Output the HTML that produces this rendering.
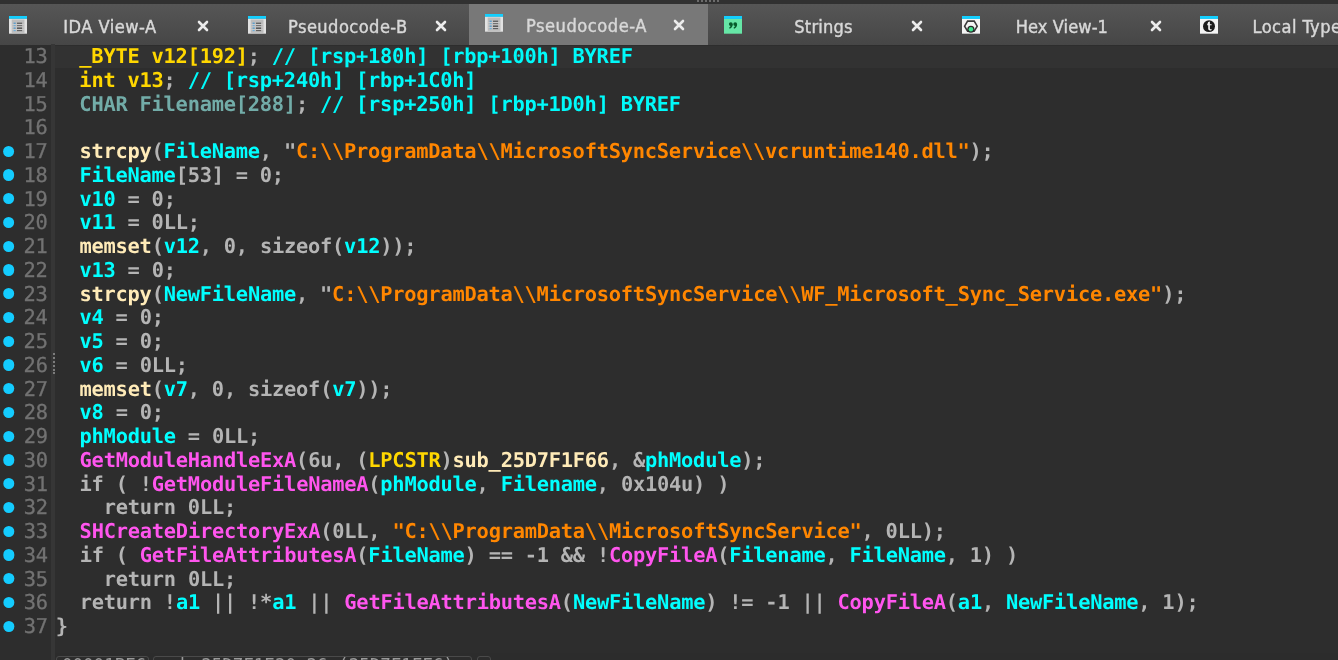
<!DOCTYPE html>
<html><head><meta charset="utf-8"><title>IDA - Pseudocode-A</title>
<style>
html,body{margin:0;padding:0}
body{width:1338px;height:660px;overflow:hidden;background:#2d2d2d;position:relative;font-family:"DejaVu Sans Mono","Liberation Mono",monospace}
#top{position:absolute;left:0;top:0;width:1338px;height:4px;background:#313131}
#top i{position:absolute;top:0;width:2px;height:2px;background:#6c6c6c}
#bar{position:absolute;left:0;top:4px;width:1338px;height:40.5px;background:linear-gradient(#565656,#464646);overflow:hidden}
#bar .act{position:absolute;left:469px;top:0;width:239px;height:41px;background:#787878}
#tabs{position:absolute;left:0;top:0;width:1338px;height:45px;overflow:hidden}
.act{position:absolute;left:469px;top:4px;width:239px;height:41px;background:#787878}
.ic{position:absolute;overflow:visible}
.tt{position:absolute;top:0;height:45px;line-height:53.5px;-webkit-text-stroke:0.42px #d8d8d8;font-family:"DejaVu Sans Condensed","DejaVu Sans","Liberation Sans",sans-serif;font-stretch:condensed;font-size:18.1px;letter-spacing:0.45px;color:#d8d8d8;white-space:pre}
#sep{position:absolute;left:50.5px;top:44px;width:4.6px;height:616px;background:#363636}
#sep i{position:absolute;left:2.6px;width:2px;height:2px;background:#7c7c7c}
#hl{position:absolute;left:55px;top:45.8px;width:1283px;height:22.4px;background:#323232}
.ln{position:absolute;left:0;width:1338px;height:23.75px;line-height:23.75px;font-size:20.4px;letter-spacing:-0.247px;white-space:pre}
.dot{position:absolute;left:3.1px;top:1.3px;width:11.2px;height:11.2px;border-radius:50%;background:#14ccff;margin-top:4.25px}
.no{position:absolute;left:23.4px;color:#727272;font-weight:normal;-webkit-text-stroke:0.3px #727272}
.code{position:absolute;left:79.3px}
.code.c0{left:55.3px}
b{font-weight:bold}
.g{color:#b4b4b4} .y{color:#ffd700} .c{color:#00ffff} .m{color:#00fafa} .t{color:#72aca8}
.f{color:#ffebb8} .p{color:#ff55ee} .s{color:#ff8600}
#code{position:absolute;left:0;top:0;width:1338px;height:660px;transform-origin:0 0;transform:matrix(1,0,0.0006,1,0,0)}
#tabs{will-change:transform}
#status{position:absolute;left:55px;top:653px;width:1283px;height:7px;background:#2c2c2c}
.sb{position:absolute;top:656.3px;height:20px;border:1px solid #4a4a4a;border-radius:3px;box-sizing:border-box;color:#9a9a9a;font-family:"DejaVu Sans Mono",monospace;font-size:17.5px;line-height:17.8px;padding-left:5px;white-space:pre;overflow:hidden}
</style></head><body>
<div id="top"><i style="left:697px"></i><i style="left:701px"></i><i style="left:705px"></i><i style="left:709px"></i><i style="left:713px"></i><i style="left:717px"></i></div>
<div id="bar"></div>
<div id="tabs"><svg class="ic" style="left:9px;top:15.5px" width="18" height="17.7" viewBox="0 0 18 18" preserveAspectRatio="none"><rect x="0" y="0" width="18" height="2.9" fill="#12cfff"/><rect x="0" y="2.9" width="18" height="15.1" fill="#e2e2e2"/><rect x="2.7" y="3.6" width="12.8" height="13.6" fill="#bdbdbd"/><g fill="#cfcfcf"><rect x="2.7" y="8.2" width="12.8" height="0.7"/><rect x="2.7" y="10.8" width="12.8" height="0.7"/><rect x="2.7" y="13.4" width="12.8" height="0.7"/></g><g><rect x="8" y="6.8" width="5.1" height="1.1" fill="#4a4a4a"/><rect x="8" y="9.2" width="5.1" height="1.1" fill="#707070"/><rect x="8" y="11.8" width="5.1" height="1.1" fill="#2a2a2a"/><rect x="8" y="14.3" width="5.1" height="1.1" fill="#5c5c5c"/></g><g fill="#3a93d2"><rect x="4.6" y="6.8" width="2.1" height="1.1"/><rect x="4.6" y="9.2" width="2.1" height="1.1" fill="#6aaedc"/><rect x="4.6" y="11.8" width="2.1" height="1.1"/><rect x="4.6" y="14.3" width="2.1" height="1.1" fill="#6aaedc"/></g></svg><span class="tt" style="left:63.3px;letter-spacing:0.48px">IDA View-A</span><svg class="ic" style="left:196px;top:18.9px" width="14" height="14" viewBox="-7 -7 14 14"><path d="M-4 -4 L4 4 M4 -4 L-4 4" stroke="#ececec" stroke-width="2.6" stroke-linecap="round" fill="none"/></svg><svg class="ic" style="left:248px;top:15.5px" width="18" height="17.7" viewBox="0 0 18 18" preserveAspectRatio="none"><rect x="0" y="0" width="18" height="2.9" fill="#12cfff"/><rect x="0" y="2.9" width="18" height="15.1" fill="#e2e2e2"/><rect x="2.7" y="3.6" width="12.8" height="13.6" fill="#bdbdbd"/><g fill="#cfcfcf"><rect x="2.7" y="8.2" width="12.8" height="0.7"/><rect x="2.7" y="10.8" width="12.8" height="0.7"/><rect x="2.7" y="13.4" width="12.8" height="0.7"/></g><g><rect x="8" y="6.8" width="5.1" height="1.1" fill="#4a4a4a"/><rect x="8" y="9.2" width="5.1" height="1.1" fill="#707070"/><rect x="8" y="11.8" width="5.1" height="1.1" fill="#2a2a2a"/><rect x="8" y="14.3" width="5.1" height="1.1" fill="#5c5c5c"/></g><g fill="#3a93d2"><rect x="4.6" y="6.8" width="2.1" height="1.1"/><rect x="4.6" y="9.2" width="2.1" height="1.1" fill="#6aaedc"/><rect x="4.6" y="11.8" width="2.1" height="1.1"/><rect x="4.6" y="14.3" width="2.1" height="1.1" fill="#6aaedc"/></g></svg><span class="tt" style="left:288px">Pseudocode-B</span><svg class="ic" style="left:433.5px;top:18.9px" width="14" height="14" viewBox="-7 -7 14 14"><path d="M-4 -4 L4 4 M4 -4 L-4 4" stroke="#ececec" stroke-width="2.6" stroke-linecap="round" fill="none"/></svg><div class="act"></div><svg class="ic" style="left:485.3px;top:14.0px" width="18" height="17.7" viewBox="0 0 18 18" preserveAspectRatio="none"><rect x="0" y="0" width="18" height="2.9" fill="#12cfff"/><rect x="0" y="2.9" width="18" height="15.1" fill="#e2e2e2"/><rect x="2.7" y="3.6" width="12.8" height="13.6" fill="#bdbdbd"/><g fill="#cfcfcf"><rect x="2.7" y="8.2" width="12.8" height="0.7"/><rect x="2.7" y="10.8" width="12.8" height="0.7"/><rect x="2.7" y="13.4" width="12.8" height="0.7"/></g><g><rect x="8" y="6.8" width="5.1" height="1.1" fill="#4a4a4a"/><rect x="8" y="9.2" width="5.1" height="1.1" fill="#707070"/><rect x="8" y="11.8" width="5.1" height="1.1" fill="#2a2a2a"/><rect x="8" y="14.3" width="5.1" height="1.1" fill="#5c5c5c"/></g><g fill="#3a93d2"><rect x="4.6" y="6.8" width="2.1" height="1.1"/><rect x="4.6" y="9.2" width="2.1" height="1.1" fill="#6aaedc"/><rect x="4.6" y="11.8" width="2.1" height="1.1"/><rect x="4.6" y="14.3" width="2.1" height="1.1" fill="#6aaedc"/></g></svg><span class="tt" style="left:526px;top:-1.5px;letter-spacing:0.54px">Pseudocode-A</span><svg class="ic" style="left:672.3px;top:17.8px" width="14" height="14" viewBox="-7 -7 14 14"><path d="M-4 -4 L4 4 M4 -4 L-4 4" stroke="#ececec" stroke-width="2.6" stroke-linecap="round" fill="none"/></svg><svg class="ic" style="left:724.1px;top:15.5px" width="18" height="17.7" viewBox="0 0 18 18" preserveAspectRatio="none"><rect x="0" y="0" width="18" height="3" fill="#12cfff"/><rect x="0" y="3" width="18" height="15" fill="#66e6a6"/><g fill="#075c2c"><circle cx="6.8" cy="8.2" r="1.9"/><path d="M8.7 8.2 q0 3.6 -3 4.9 l-.6 -1.1 q1.7 -1 1.7 -3z"/><circle cx="11.2" cy="8.2" r="1.9"/><path d="M13.1 8.2 q0 3.6 -3 4.9 l-.6 -1.1 q1.7 -1 1.7 -3z"/></g></svg><span class="tt" style="left:794.3px;letter-spacing:0.2px">Strings</span><svg class="ic" style="left:909.7px;top:18.9px" width="14" height="14" viewBox="-7 -7 14 14"><path d="M-4 -4 L4 4 M4 -4 L-4 4" stroke="#ececec" stroke-width="2.6" stroke-linecap="round" fill="none"/></svg><svg class="ic" style="left:961.5px;top:15.5px" width="18" height="17.7" viewBox="0 0 18 18" preserveAspectRatio="none"><rect x="0" y="0" width="18" height="3" fill="#12cfff"/><rect x="0" y="3" width="18" height="15" fill="#f4f4f4"/><path d="M5.6 5.2 L12.2 5.2 L15.2 10.4 L12.2 15.6 L5.6 15.6 L2.6 10.4 Z" fill="none" stroke="#3a3a3a" stroke-width="1.6"/><circle cx="8.9" cy="13.4" r="3.6" fill="#2a2a2a"/><circle cx="8.9" cy="13.4" r="2.3" fill="#3fe48f"/></svg><span class="tt" style="left:1015.7px;letter-spacing:0.08px">Hex View-1</span><svg class="ic" style="left:1148.5px;top:18.9px" width="14" height="14" viewBox="-7 -7 14 14"><path d="M-4 -4 L4 4 M4 -4 L-4 4" stroke="#ececec" stroke-width="2.6" stroke-linecap="round" fill="none"/></svg><svg class="ic" style="left:1200.3px;top:15.5px" width="18" height="17.7" viewBox="0 0 18 18" preserveAspectRatio="none"><rect x="0" y="0" width="18" height="3" fill="#12cfff"/><rect x="0" y="3" width="18" height="15" fill="#f4f4f4"/><circle cx="9" cy="10.4" r="6" fill="#1c1c1c"/><path d="M8.2 6.2 L9.9 5.6 L9.9 8.3 L11.6 8.3 L11.6 9.4 L9.9 9.4 L9.9 12.6 Q9.9 13.6 11 13.4 L11.6 13.2 L11.6 14.2 Q10.4 15 9.2 14.6 Q8.2 14.2 8.2 12.9 L8.2 9.4 L7.2 9.4 L7.2 8.6 Z" fill="#f4f4f4"/></svg><span class="tt" style="left:1252.5px">Local Types</span></div>
<div id="hl"></div>
<div id="sep"><i style="top:308.70px"></i><i style="top:312.65px"></i><i style="top:316.60px"></i><i style="top:320.55px"></i><i style="top:324.50px"></i><i style="top:328.45px"></i></div>
<div id="code"><div class="ln" style="top:45.20px"><span class="no">13</span><span class="code"><b class="y">_BYTE v12[192]</b><b class="g">; </b><b class="m">// [rsp+180h] [rbp+100h] BYREF</b></span></div>
<div class="ln" style="top:68.95px"><span class="no">14</span><span class="code"><b class="y">int v13</b><b class="g">; </b><b class="m">// [rsp+240h] [rbp+1C0h]</b></span></div>
<div class="ln" style="top:92.70px"><span class="no">15</span><span class="code"><b class="t">CHAR Filename[288]</b><b class="g">; </b><b class="m">// [rsp+250h] [rbp+1D0h] BYREF</b></span></div>
<div class="ln" style="top:116.45px"><span class="no">16</span><span class="code"></span></div>
<div class="ln" style="top:140.20px"><i class="dot"></i><span class="no">17</span><span class="code"><b class="f">strcpy</b><b class="g">(</b><b class="c">FileName</b><b class="g">, "</b><b class="s">C:\\ProgramData\\MicrosoftSyncService\\vcruntime140.dll"</b><b class="g">);</b></span></div>
<div class="ln" style="top:163.95px"><i class="dot"></i><span class="no">18</span><span class="code"><b class="c">FileName</b><b class="g">[53] = 0;</b></span></div>
<div class="ln" style="top:187.70px"><i class="dot"></i><span class="no">19</span><span class="code"><b class="c">v10</b><b class="g"> = 0;</b></span></div>
<div class="ln" style="top:211.45px"><i class="dot"></i><span class="no">20</span><span class="code"><b class="c">v11</b><b class="g"> = 0LL;</b></span></div>
<div class="ln" style="top:235.20px"><i class="dot"></i><span class="no">21</span><span class="code"><b class="f">memset</b><b class="g">(</b><b class="c">v12</b><b class="g">, 0, sizeof(</b><b class="c">v12</b><b class="g">));</b></span></div>
<div class="ln" style="top:258.95px"><i class="dot"></i><span class="no">22</span><span class="code"><b class="c">v13</b><b class="g"> = 0;</b></span></div>
<div class="ln" style="top:282.70px"><i class="dot"></i><span class="no">23</span><span class="code"><b class="f">strcpy</b><b class="g">(</b><b class="c">NewFileName</b><b class="g">, "</b><b class="s">C:\\ProgramData\\MicrosoftSyncService\\WF_Microsoft_Sync_Service.exe"</b><b class="g">);</b></span></div>
<div class="ln" style="top:306.45px"><i class="dot"></i><span class="no">24</span><span class="code"><b class="c">v4</b><b class="g"> = 0;</b></span></div>
<div class="ln" style="top:330.20px"><i class="dot"></i><span class="no">25</span><span class="code"><b class="c">v5</b><b class="g"> = 0;</b></span></div>
<div class="ln" style="top:353.95px"><i class="dot"></i><span class="no">26</span><span class="code"><b class="c">v6</b><b class="g"> = 0LL;</b></span></div>
<div class="ln" style="top:377.70px"><i class="dot"></i><span class="no">27</span><span class="code"><b class="f">memset</b><b class="g">(</b><b class="c">v7</b><b class="g">, 0, sizeof(</b><b class="c">v7</b><b class="g">));</b></span></div>
<div class="ln" style="top:401.45px"><i class="dot"></i><span class="no">28</span><span class="code"><b class="c">v8</b><b class="g"> = 0;</b></span></div>
<div class="ln" style="top:425.20px"><i class="dot"></i><span class="no">29</span><span class="code"><b class="c">phModule</b><b class="g"> = 0LL;</b></span></div>
<div class="ln" style="top:448.95px"><i class="dot"></i><span class="no">30</span><span class="code"><b class="p">GetModuleHandleExA</b><b class="g">(6u, (</b><b class="y">LPCSTR</b><b class="g">)</b><b class="f">sub_25D7F1F66</b><b class="g">, &amp;</b><b class="c">phModule</b><b class="g">);</b></span></div>
<div class="ln" style="top:472.70px"><i class="dot"></i><span class="no">31</span><span class="code"><b class="g">if ( !</b><b class="p">GetModuleFileNameA</b><b class="g">(</b><b class="c">phModule</b><b class="g">, </b><b class="c">Filename</b><b class="g">, 0x104u) )</b></span></div>
<div class="ln" style="top:496.45px"><i class="dot"></i><span class="no">32</span><span class="code"><b class="g">  return 0LL;</b></span></div>
<div class="ln" style="top:520.20px"><i class="dot"></i><span class="no">33</span><span class="code"><b class="p">SHCreateDirectoryExA</b><b class="g">(0LL, </b><b class="s">"C:\\ProgramData\\MicrosoftSyncService"</b><b class="g">, 0LL);</b></span></div>
<div class="ln" style="top:543.95px"><i class="dot"></i><span class="no">34</span><span class="code"><b class="g">if ( </b><b class="p">GetFileAttributesA</b><b class="g">(</b><b class="c">FileName</b><b class="g">) == -1 &amp;&amp; !</b><b class="p">CopyFileA</b><b class="g">(</b><b class="c">Filename</b><b class="g">, </b><b class="c">FileName</b><b class="g">, 1) )</b></span></div>
<div class="ln" style="top:567.70px"><i class="dot"></i><span class="no">35</span><span class="code"><b class="g">  return 0LL;</b></span></div>
<div class="ln" style="top:591.45px"><i class="dot"></i><span class="no">36</span><span class="code"><b class="g">return !</b><b class="c">a1</b><b class="g"> || !*</b><b class="c">a1</b><b class="g"> || </b><b class="p">GetFileAttributesA</b><b class="g">(</b><b class="c">NewFileName</b><b class="g">) != -1 || </b><b class="p">CopyFileA</b><b class="g">(</b><b class="c">a1</b><b class="g">, </b><b class="c">NewFileName</b><b class="g">, 1);</b></span></div>
<div class="ln" style="top:615.20px"><i class="dot"></i><span class="no">37</span><span class="code c0"><b class="g">}</b></span></div></div>
<div id="status"></div>
<div class="sb" style="left:56px;width:93px">00001BE6</div>
<div class="sb" style="left:153px;width:319px">sub_25D7F1E20:26 (25D7F1FE6)</div>
<div class="sb" style="left:477px;width:14px"></div>
</body></html>
